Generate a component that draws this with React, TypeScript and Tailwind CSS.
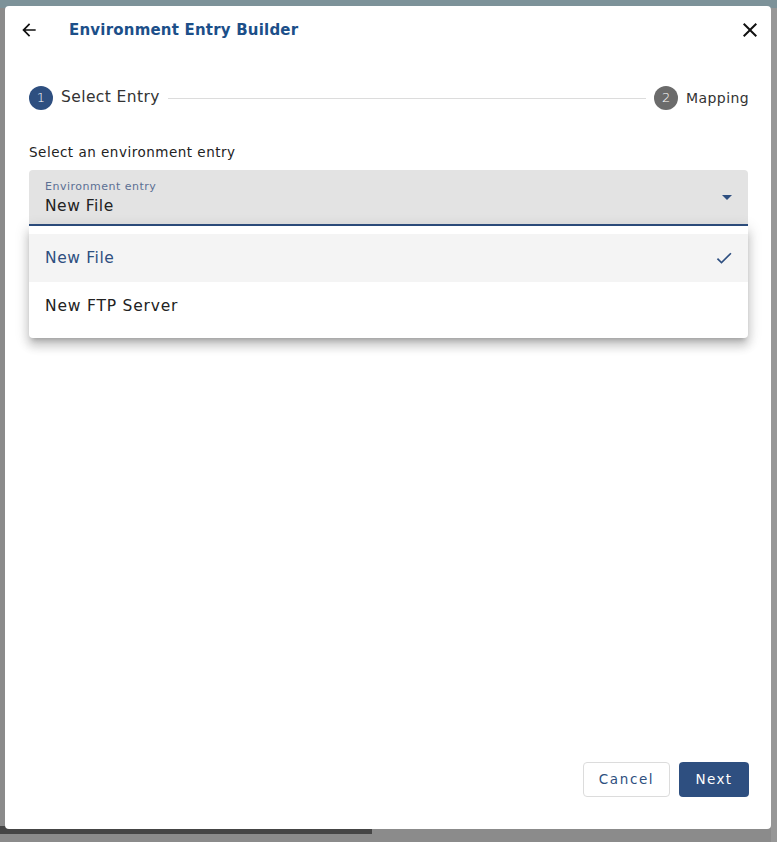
import React from "react";

export default function App() {
  const font = { fontFamily: '"DejaVu Sans", "Open Sans", sans-serif' };
  return (
    <div className="relative w-[777px] h-[842px] bg-[#8b8b8b] overflow-hidden" style={font}>
      <div className="absolute left-0 top-0 w-full h-[8px] bg-[#7d9299]" />
      <div className="absolute right-0 top-[8px] w-[6px] h-full bg-[#979797]" />
      <div className="absolute left-0 top-[826px] w-[372px] h-[8px] bg-[#454545]" />
      <div className="absolute left-[5px] top-[6px] w-[766px] h-[823px] bg-white rounded-[4px] flex flex-col">
        {/* header */}
        <div className="flex items-center h-[48px] pl-[14px] pr-[9px]">
          <svg width="20" height="20" viewBox="0 0 24 24">
            <path d="M20 11H7.83l5.59-5.59L12 4l-8 8 8 8 1.41-1.41L7.83 13H20v-2z" fill="#111" />
          </svg>
          <div className="ml-[30px] text-[15px] font-semibold text-[#1c4f89] tracking-[0.2px]">
            Environment Entry Builder
          </div>
          <div className="flex-1" />
          <svg width="24" height="24" viewBox="0 0 24 24">
            <path d="M19 6.41L17.59 5 12 10.59 6.41 5 5 6.41 10.59 12 5 17.59 6.41 19 12 13.41 17.59 19 19 17.59 13.41 12z" fill="#111" />
          </svg>
        </div>
        {/* stepper */}
        <div className="flex items-center mt-[32px] pl-[24px] pr-[22px]">
          <div className="w-[24px] h-[24px] rounded-full bg-[#2e4f80] text-white text-[13px] flex items-center justify-center font-light">1</div>
          <div className="ml-[8px] text-[15.5px] text-[#333] tracking-[0.4px]">Select Entry</div>
          <div className="flex-1 h-px bg-[#dcdcdc] mx-[8px]" />
          <div className="w-[24px] h-[24px] rounded-full bg-[#6b6b6b] text-white text-[13px] flex items-center justify-center font-light">2</div>
          <div className="ml-[8px] text-[14px] text-[#333] tracking-[0.4px]">Mapping</div>
        </div>
        <div className="mt-[32px] px-[24px] text-[13.5px] text-[#222] tracking-[0.5px]">Select an environment entry</div>
        <div className="mt-[8px] ml-[24px] mr-[23px] relative">
          <div className="h-[56px] bg-[#e3e3e3] rounded-t-[4px] border-b-2 border-[#2e4f80] pl-[16px] pr-[16px] flex items-center">
            <div className="flex-1 pt-[2px]">
              <div className="text-[11px] text-[#5b6f93] leading-[14px] tracking-[0.5px]">Environment entry</div>
              <div className="text-[15.5px] text-[#222] leading-[22px] mt-[1px] tracking-[0.5px]">New File</div>
            </div>
            <svg width="10" height="5" viewBox="0 0 10 5">
              <path d="M0 0l5 5 5-5z" fill="#2e4f80" />
            </svg>
          </div>
          <div className="absolute left-0 right-0 top-[56px] bg-white rounded-b-[4px] py-[8px] shadow-[0_5px_5px_-3px_rgba(0,0,0,0.2),0_8px_10px_1px_rgba(0,0,0,0.14),0_3px_14px_2px_rgba(0,0,0,0.12)] z-10">
            <div className="h-[48px] bg-[#f4f4f4] flex items-center pl-[16px] pr-[14px]">
              <div className="flex-1 text-[15.5px] text-[#2e4f80] tracking-[0.6px]">New File</div>
              <svg width="20" height="20" viewBox="0 0 24 24">
                <path d="M9 16.17L4.83 12l-1.42 1.41L9 19 21 7l-1.41-1.41z" fill="#2e4f80" />
              </svg>
            </div>
            <div className="h-[48px] flex items-center pl-[16px]">
              <div className="text-[15.5px] text-[#222] tracking-[0.8px]">New FTP Server</div>
            </div>
          </div>
        </div>
        <div className="flex-1" />
        <div className="flex justify-end gap-[9px] pl-[22px] pr-[22px] pb-[32px]">
          <button className="h-[35px] w-[87px] rounded-[4px] border border-[#dcdcdc] bg-white text-[#2e4f80] text-[13.5px] tracking-[1.6px]">
            Cancel
          </button>
          <button className="h-[35px] w-[70px] rounded-[4px] bg-[#2e4f80] text-white text-[13.5px] tracking-[1.4px]">
            Next
          </button>
        </div>
      </div>
    </div>
  );
}
